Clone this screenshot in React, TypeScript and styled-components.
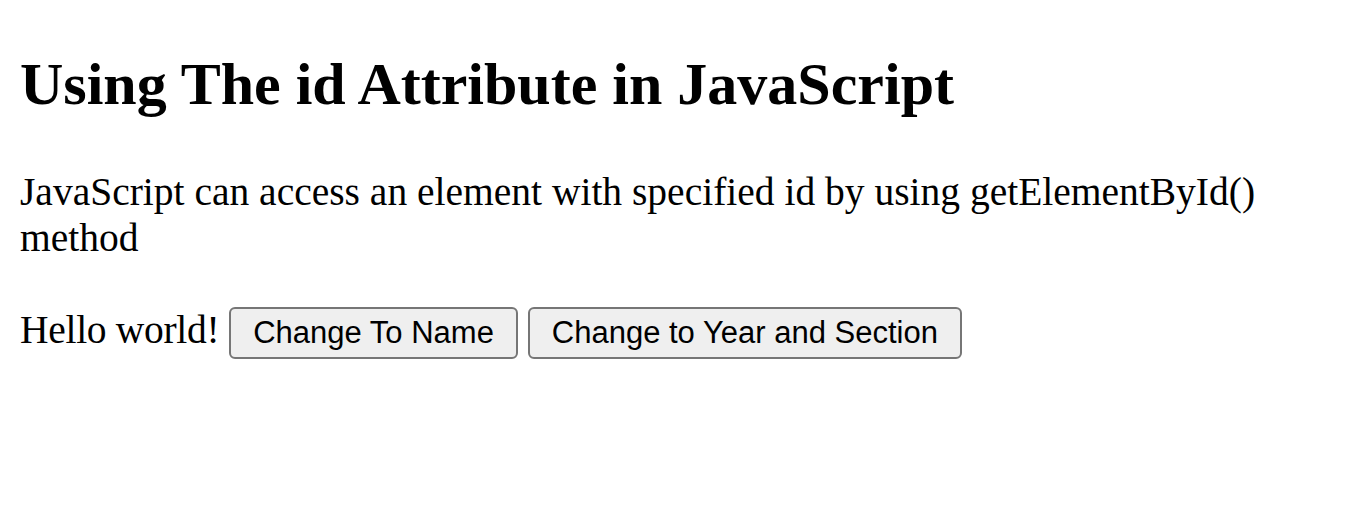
import { useState } from 'react'
import styled, { createGlobalStyle } from 'styled-components'

const GlobalStyle = createGlobalStyle`
  body {
    margin: 20px;
    background: #ffffff;
    color: #000000;
    font-family: "Liberation Serif", "Times New Roman", serif;
    font-size: 39.5px;
  }
`

export default function App() {
  const [text, setText] = useState('Hello world!')

  return (
    <>
      <GlobalStyle />
      <Page>
        <Title>Using The id Attribute in JavaScript</Title>

        <Paragraph>JavaScript can access an element with specified id by using getElementById() method</Paragraph>

        <ButtonRow>
          <Demo id="demo">{text}</Demo>{' '}
          <Button onClick={() => setText('Juan Dela Cruz')}>Change To Name</Button>{' '}
          <Button onClick={() => setText('BSIT 2-A')}>Change to Year and Section</Button>
        </ButtonRow>
      </Page>
    </>
  )
}

const Page = styled.main`
  display: block;
`

const Title = styled.h2`
  font-size: 60px;
  font-weight: bold;
  margin: 30px 0 50px;
`

const Paragraph = styled.p`
  margin: 40px 0;
`

const ButtonRow = styled.p`
  margin: 46px 0 40px;
`

const Demo = styled.span`
  letter-spacing: -0.3px;
`

const Button = styled.button`
  font-family: "Liberation Sans", Arial, sans-serif;
  font-size: 31px;
  color: #000000;
  background: #efefef;
  border: 2px solid #767676;
  border-radius: 6px;
  padding: 6px 22px;
  cursor: pointer;
`
